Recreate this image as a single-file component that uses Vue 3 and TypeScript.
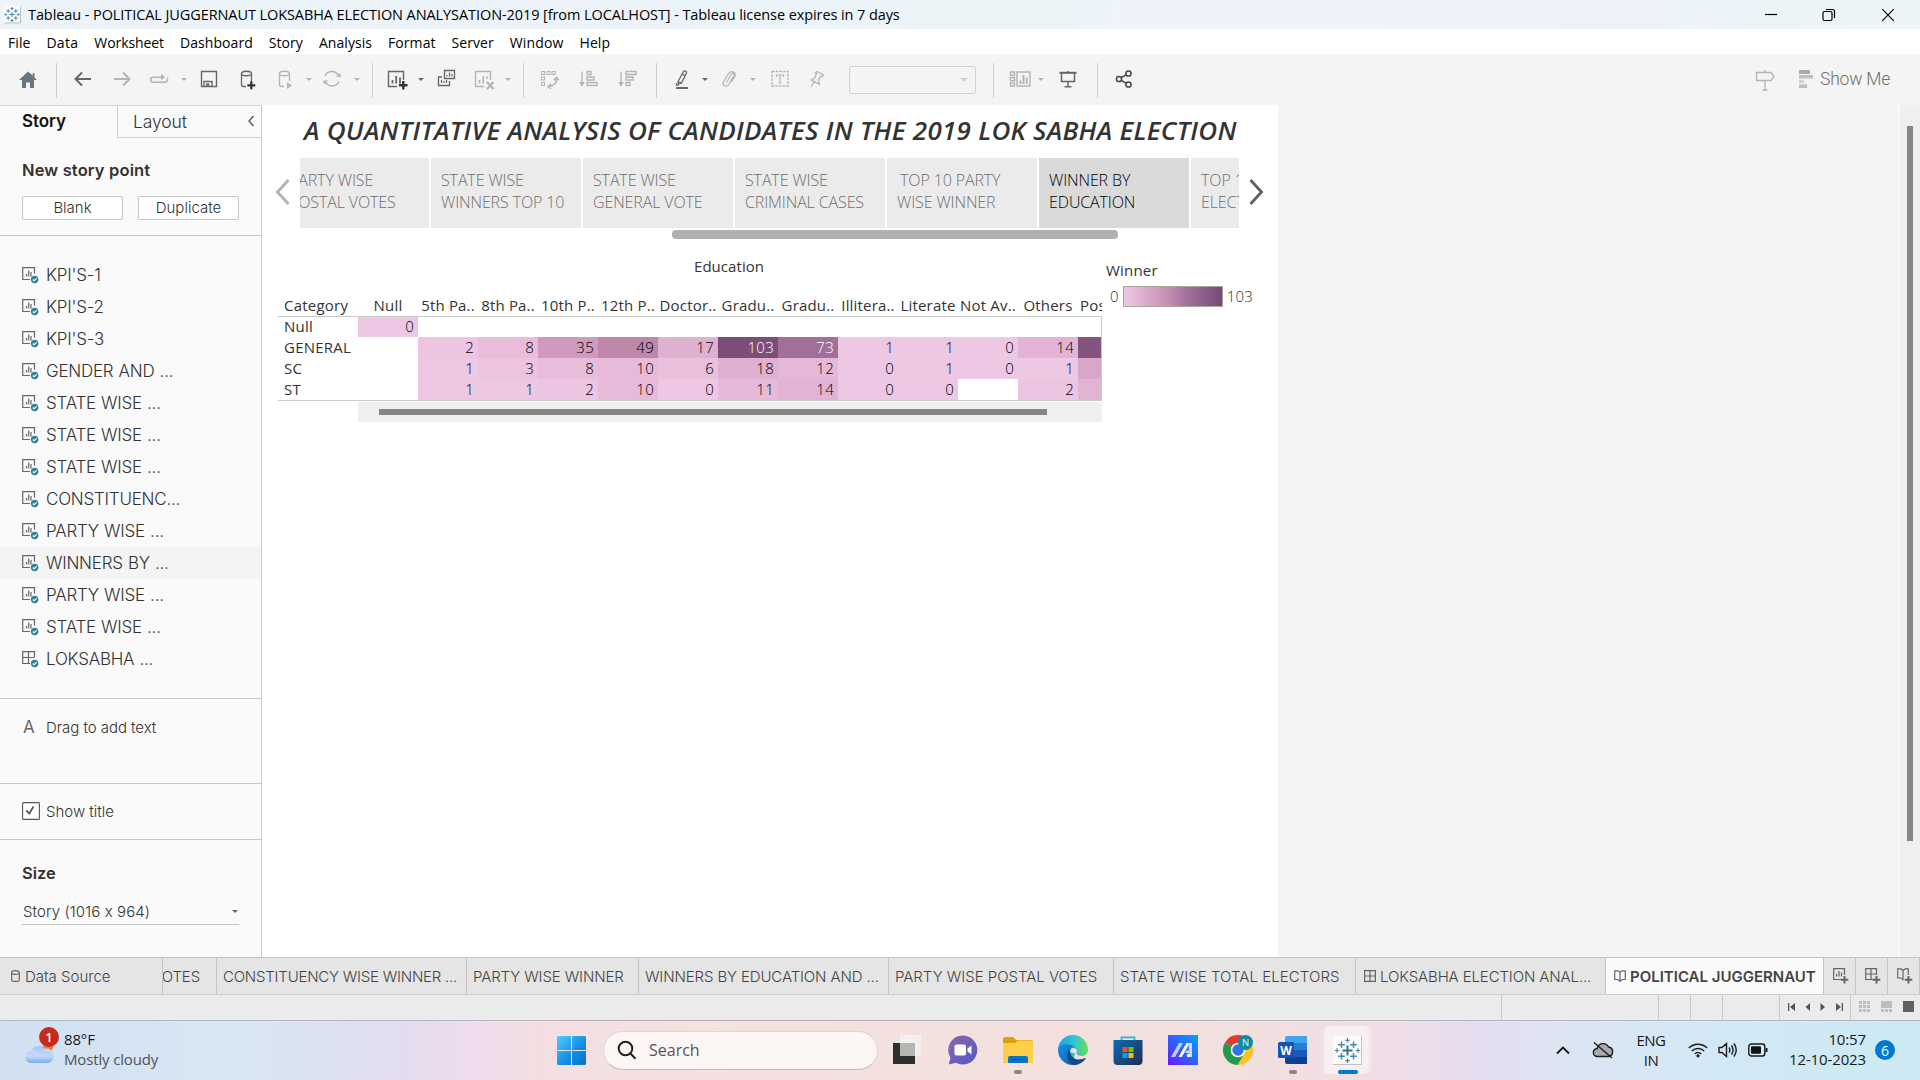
<script setup lang="ts">
interface Tool { icon: string; gap: number; kind?: 'sep' | 'caret' | 'box'; tone?: 'dim' | 'dark' }
interface Cell { v: string; c: string; light?: boolean }

const menus = ['File', 'Data', 'Worksheet', 'Dashboard', 'Story', 'Analysis', 'Format', 'Server', 'Window', 'Help']

const glyphs: Record<string, string> = {
  home: '<path d="M12 4.500 3 13h3v8h4v-5.500h4V21h4v-8h3l-2.500-2.400V6h-1.700v2.600z" fill="#687684" stroke="none"/>',
  back: '<path d="M20 12H5M11 5.500 4.500 12l6.500 6.500" stroke-width="2"/>',
  forward: '<path d="M4 12h15M13 5.500l6.500 6.500-6.500 6.500" stroke-width="2"/>',
  redo: '<path d="M16 10.200H6.500c-4 0-4 5 0 5h11c3 0 4-2.500 2.500-4.500" stroke-width="1.500"/><path d="M14 6.500v7l4-3.500z" fill="currentColor" stroke="none"/>',
  save: '<path d="M4.500 4.500h15v15h-15zM7 19.500v-5h8v5M9.800 19.500v-2.500h1.700v2.500" stroke-width="1.400"/>',
  dbAdd: '<path d="M11 19.500H8.500c-1.500 0-2-.8-2-1.800V6.500M16.500 6.500V14M6.500 6.500c0-3 10-3 10 0s-10 3-10 0z" stroke-width="1.300"/><path d="M16.300 14.300v8M12.300 18.300h8" stroke="#333" stroke-width="2.300"/>',
  dbRun: '<path d="M11 19.500H8.500c-1.500 0-2-.8-2-1.800V6.500M16.500 6.500V14M6.500 6.500c0-3 10-3 10 0s-10 3-10 0z" stroke-width="1.300"/><path d="M14 15v7l5-3.500z" fill="currentColor" stroke="none"/>',
  refresh: '<path d="M5 9a7.500 7.500 0 0 1 13.500-.5M19 14.500a7.500 7.500 0 0 1-13.500.5" stroke-width="1.500"/><path d="M16 10h5l-.8-4zM8 13.500H3.200L4 18z" fill="currentColor" stroke="none"/>',
  sheetAdd: '<path d="M12 19.500H3.500v-15h15V13" stroke-width="1.400"/><path d="M7.500 16.500v-3.500M11.200 16.500V9M15 16.500v-6" stroke-width="1.800"/><path d="M18.300 14v8.500M14 18.300h8.500" stroke="#333" stroke-width="2.400"/>',
  duplicate: '<path d="M10.500 3.500h10v8h-10zM8 10H4.500v8.500h11V14" stroke-width="1.300"/><path d="M13 9.500V8M15.500 9.500V5.500M18 9.500V7M7.500 16v-3M10 16v-2M12.500 16v-3" stroke-width="1.200"/>',
  clear: '<path d="M12 19.500H3.500v-15h15V13" stroke-width="1.400"/><path d="M7.500 16.500v-3.500M11.200 16.500V9M15 12v-2.500" stroke-width="1.600"/><path d="M15 15l6.500 7M21.500 15 15 22" stroke-width="2.200"/>',
  swap: '<path d="M3.500 4.500h3v3h-3zM9 4.500h3v3H9zM14 4.500h3v3h-3zM3.500 10h3v3h-3zM3.500 15.500h3v3h-3z" stroke-width="1.100"/><path d="M18.500 11.500c.5 4-2 7-7.500 8M15.800 13.200l2.700-3 2.500 3M13 16.800l-3 2.600 3 2.300" stroke-width="1.400"/>',
  sortAsc: '<path d="M5 4.500V19M10 4.500h4v3h-4zM10 10h7v3h-7zM10 15.500h10v3H10z" stroke-width="1.300"/><path d="M2.200 15h5.600L5 19.500z" fill="currentColor" stroke="none"/>',
  sortDesc: '<path d="M5 4.500V19M10 4.500h10v3H10zM10 10h7v3h-7zM10 15.500h4v3h-4z" stroke-width="1.300"/><path d="M2.200 15h5.600L5 19.500z" fill="currentColor" stroke="none"/>',
  highlight: '<path d="M12.500 4.500 7 14.500l.5 2.500 3-1L15.500 6c.5-2-2-2.800-3-1.500zM11 7l3.500 2M7 14.500l3.500 1.500M5.500 16v2.200h2.500" stroke-width="1.300"/><path d="M5 21h12" stroke-width="2"/>',
  clip: '<path d="M8.500 15.500l5-8.500c1-1.800 3.500-.5 2.500 1.500l-5.500 9.500c-1.800 2.500-6.500.5-5-3l5-8.500c2.500-3.500 8-1.500 6.500 2.500l-3.500 6" stroke-width="1.200"/>',
  text: '<path d="M4 4.500h16v14.500H4z" stroke-width="1.400" stroke-dasharray="2.500 1.200"/><path d="M8.500 10V8h7v2M12 8v8M10.300 16h3.400" stroke-width="1.200"/>',
  pin: '<path d="M12 4.500l6.500 3.500-1 1.500-2-.3-2 4 .8 4-8-4.300 3.300-1.800 2-4.300-1.200-1zM9.500 14.500 6 19.500" stroke-width="1.300"/>',
  cards: '<path d="M2.500 5h4v3.200h-4zM2.500 10.500h4v3.200h-4zM2.500 16h4v3h-4zM9 5h13v14H9z" stroke-width="1.400"/><path d="M12.500 17v-3.500M15.500 17V8M18.700 17v-6.500" stroke-width="1.900"/>',
  present: '<path d="M3.500 5.800h17" stroke-width="2"/><path d="M12 4v2M5.500 6v8.500h13V6M12 14.500v5M8.500 19.700h7" stroke-width="1.500"/>',
  share: '<circle cx="6" cy="12" r="2.600"/><circle cx="15.500" cy="6.500" r="2.600"/><circle cx="15.500" cy="17.500" r="2.600"/><path d="M8.300 10.700l5-3M8.300 13.300l5 3"/>',
  signpost: '<path d="M12 3v2.500M3.500 5.500h14.500l3 4-3 4H3.500zM12 13.500V22.500M9.500 23h5" stroke-width="1.300"/>',
}

const tools: Tool[] = [
  { icon: 'home', gap: 16 }, { icon: '', gap: 16, kind: 'sep' },
  { icon: 'back', gap: 14 }, { icon: 'forward', gap: 15, tone: 'dim' }, { icon: 'redo', gap: 13, tone: 'dim' }, { icon: '', gap: 10, kind: 'caret', tone: 'dim' },
  { icon: 'save', gap: 9 }, { icon: 'dbAdd', gap: 14 }, { icon: 'dbRun', gap: 14, tone: 'dim' }, { icon: '', gap: 9, kind: 'caret', tone: 'dim' },
  { icon: 'refresh', gap: 7, tone: 'dim' }, { icon: '', gap: 10, kind: 'caret', tone: 'dim' }, { icon: '', gap: 11, kind: 'sep' },
  { icon: 'sheetAdd', gap: 12 }, { icon: '', gap: 9, kind: 'caret' }, { icon: 'duplicate', gap: 9 }, { icon: 'clear', gap: 14, tone: 'dim' },
  { icon: '', gap: 9, kind: 'caret', tone: 'dim' }, { icon: '', gap: 11, kind: 'sep' },
  { icon: 'swap', gap: 14, tone: 'dim' }, { icon: 'sortAsc', gap: 15, tone: 'dim' }, { icon: 'sortDesc', gap: 15, tone: 'dim' }, { icon: '', gap: 16, kind: 'sep' },
  { icon: 'highlight', gap: 14 }, { icon: '', gap: 7, kind: 'caret' }, { icon: 'clip', gap: 9, tone: 'dim' }, { icon: '', gap: 8, kind: 'caret', tone: 'dim' },
  { icon: 'text', gap: 11, tone: 'dim' }, { icon: 'pin', gap: 13, tone: 'dim' }, { icon: '', gap: 20, kind: 'box' }, { icon: '', gap: 17, kind: 'sep' },
  { icon: 'cards', gap: 14, tone: 'dim' }, { icon: '', gap: 6, kind: 'caret', tone: 'dim' }, { icon: 'present', gap: 11 }, { icon: '', gap: 17, kind: 'sep' },
  { icon: 'share', gap: 15, tone: 'dark' },
]

const sheets = ["KPI'S-1", "KPI'S-2", "KPI'S-3", 'GENDER AND ...', 'STATE WISE ...', 'STATE WISE ...', 'STATE WISE ...', 'CONSTITUENC...', 'PARTY WISE ...', 'WINNERS BY ...', 'PARTY WISE ...', 'STATE WISE ...', 'LOKSABHA ...']

const points = [
  ['PARTY WISE', 'POSTAL VOTES'], ['STATE WISE', 'WINNERS TOP 10'], ['STATE WISE', 'GENERAL VOTE'], ['STATE WISE', 'CRIMINAL CASES'],
  ['TOP 10 PARTY', 'WISE WINNER'], ['WINNER BY', 'EDUCATION'], ['TOP 10', 'ELECTORS'],
]

const columns = ['Null', '5th Pa..', '8th Pa..', '10th P..', '12th P..', 'Doctor..', 'Gradu..', 'Gradu..', 'Illitera..', 'Literate', 'Not Av..', 'Others', 'Post']

const shades: Record<string, string> = {
  0: '#edc8e4', 1: '#eec7e3', 2: '#edc5e2', 3: '#ecc4e0', 6: '#eac0dd', 8: '#e8bcda', 10: '#e7bad9', 11: '#e6b9d8', 12: '#e5b8d7',
  14: '#e2b3d4', 17: '#dfb1d0', 18: '#dfb0cf', 35: '#cf9abd', 49: '#bf87aa', 73: '#a0709b', 103: '#7b4d78',
}
const cell = (v: string): Cell => ({ v, c: v ? shades[v] : 'transparent', light: Number(v) > 60 })
const tail = (c: string): Cell => ({ v: '', c })
const blank = Array<string>(12).fill('')
const table: { name: string; cells: Cell[] }[] = [
  { name: 'Null', cells: ['0', ...blank].map(cell) },
  { name: 'GENERAL', cells: [...['', '2', '8', '35', '49', '17', '103', '73', '1', '1', '0', '14'].map(cell), tail('#83557e')] },
  { name: 'SC', cells: [...['', '1', '3', '8', '10', '6', '18', '12', '0', '1', '0', '1'].map(cell), tail('#d7a6c8')] },
  { name: 'ST', cells: [...['', '1', '1', '2', '10', '0', '11', '14', '0', '0', '', '2'].map(cell), tail('#e2b4d4')] },
]

const tabs: { label: string; w: number; icon?: string; on?: boolean; fit?: string }[] = [
  { label: 'CONSTITUENCY WISE WINNER ...', w: 250, fit: 'tight' }, { label: 'PARTY WISE WINNER', w: 172 }, { label: 'WINNERS BY EDUCATION AND ...', w: 250 },
  { label: 'PARTY WISE POSTAL VOTES', w: 225, fit: 'loose' }, { label: 'STATE WISE TOTAL ELECTORS', w: 242, fit: 'wide' },
  { label: 'LOKSABHA ELECTION ANAL...', w: 250, icon: 'dash' }, { label: 'POLITICAL JUGGERNAUT', w: 218, icon: 'book', on: true },
]
</script>

<template>
  <div class="screen">
    <header class="titlebar">
      <svg class="app-icon" viewBox="0 0 18 18"><rect width="18" height="18" fill="#f7f8f8" /><path d="M17.500 1v16.500H1" fill="none" stroke="#b9c0c4" /><path d="M9 6.500v5M6.500 9h5M9 1.500v3M7.500 3h3M9 13.500v3M7.500 15h3M1.500 9h2.500M2.700 7.800v2.400M14 9h2.500M15.200 7.800v2.400M3.500 5.500H7M5.200 3.800v3.400M11 5.500h3.500M12.800 3.800v3.400M3.500 12.500H7M5.200 10.800v3.400M11 12.500h3.500M12.800 10.800v3.400" stroke="#4584ac" fill="none" /></svg>
      <span class="title">Tableau - POLITICAL JUGGERNAUT LOKSABHA ELECTION ANALYSATION-2019 [from LOCALHOST] - Tableau license expires in 7 days</span>
      <div class="win">
        <svg viewBox="0 0 14 14"><path d="M1 6.500h12" /></svg>
        <svg viewBox="0 0 14 14"><rect x="1" y="3.500" width="9" height="9" rx="1.500" /><path d="M4 1.500h6.500a2 2 0 0 1 2 2V10" /></svg>
        <svg viewBox="0 0 14 14"><path d="M1.200 1.200l11.600 11.600M12.800 1.200 1.200 12.800" /></svg>
      </div>
    </header>
    <nav class="menubar"><span v-for="m in menus" :key="m" :class="m.toLowerCase()">{{ m }}</span></nav>

    <div class="toolbar">
      <template v-for="(t, i) in tools" :key="i">
        <i v-if="t.kind === 'sep'" class="sep" :style="{ marginLeft: t.gap + 'px' }"></i>
        <i v-else-if="t.kind === 'caret'" class="caret" :class="t.tone" :style="{ marginLeft: t.gap + 'px' }"></i>
        <div v-else-if="t.kind === 'box'" class="combo" :style="{ marginLeft: t.gap + 'px' }"><i class="caret faint"></i></div>
        <svg v-else class="tool" :class="t.tone" viewBox="0 0 24 24" :style="{ marginLeft: t.gap + 'px' }" v-html="glyphs[t.icon]"></svg>
      </template>
      <div class="right-tools">
        <svg class="tool dim" viewBox="0 0 24 24" v-html="glyphs.signpost"></svg>
        <svg class="bars" viewBox="0 0 14 18"><path d="M0 0h11v4H0z" fill="#aaa" /><path d="M0 5h14v3.600H0zM0 14.500h8V18H0z" fill="#bfbfbf" /><path d="M0 9.700h5v3.500H0z" fill="#d2d2d2" /></svg>
        <span class="showme">Show Me</span>
      </div>
    </div>

    <div class="work">
      <aside class="side">
        <div class="side-tabs">
          <div class="tab-story">Story</div>
          <div class="tab-layout"><span>Layout</span><svg viewBox="0 0 8 12"><path d="M6.500 1 2 6l4.500 5" /></svg></div>
        </div>
        <section class="newpoint">
          <h3>New story point</h3>
          <div class="btns"><button>Blank</button><button>Duplicate</button></div>
        </section>
        <section class="sheets">
          <div v-for="(s, i) in sheets" :key="i" class="sheet" :class="{ hover: i === 9 }">
            <svg viewBox="0 0 18 17">
              <path d="M12.500 6.500V.7H.7v11.800H8" />
              <path v-if="i < 12" d="M4.500 9.500V7M6.700 9.500V3.500M9 9.500V5" />
              <path v-else d="M6.500.7v11.800M.7 6.500h11.800" />
              <circle cx="12.600" cy="12.500" r="3.700" fill="#2f7f9f" stroke="none" /><path d="M10.800 12.500l1.400 1.400 2.400-2.700" stroke="#fff" />
            </svg>
            <span>{{ s }}</span>
          </div>
        </section>
        <section class="drag"><b>A</b><span>Drag to add text</span></section>
        <section class="showtitle"><svg viewBox="0 0 18 18"><rect x=".6" y=".6" width="16.800" height="16.800" rx="1" fill="#fff" /><path d="M4.300 8.300l3 3.200L11.500 4.500" stroke-width="1.700" /></svg><span>Show title</span></section>
        <section class="size">
          <h3>Size</h3>
          <div class="select"><span>Story (1016 x 964)</span><i class="caret"></i></div>
        </section>
      </aside>

      <main class="canvas">
        <h1>A QUANTITATIVE ANALYSIS OF CANDIDATES IN THE 2019 LOK SABHA ELECTION</h1>
        <div class="nav">
          <svg class="chev" viewBox="0 0 16 30"><path d="M13.500 3 2.500 15l11 12" stroke="#b2b2b2" /></svg>
          <div class="strip">
            <div v-for="(p, i) in points" :key="i" class="point" :class="{ on: i === 5, first: i === 0, indent: i === 4 }"><span>{{ p[0] }}</span><span>{{ p[1] }}</span></div>
          </div>
          <svg class="chev" viewBox="0 0 16 30"><path d="M2.500 3l11 12-11 12" stroke="#606060" /></svg>
        </div>
        <div class="nav-scroll"></div>

        <div class="viz">
          <div class="grid-wrap">
            <div class="axis">Education</div>
            <div class="heads"><span class="cat">Category</span><div class="cols"><span v-for="(c, i) in columns" :key="i">{{ c }}</span></div></div>
            <div class="body">
              <div v-for="r in table" :key="r.name" class="row">
                <span class="cat">{{ r.name }}</span>
                <div class="cols"><span v-for="(c, i) in r.cells" :key="i" class="cell" :class="{ light: c.light }" :style="{ background: c.c }">{{ c.v }}</span></div>
              </div>
            </div>
            <div class="hscroll"><i></i></div>
          </div>
          <div class="legend"><div class="lt">Winner</div><div class="lr"><span>0</span><i></i><span>103</span></div></div>
        </div>
      </main>
      <div class="void"></div>
      <div class="vscroll"><i></i></div>
    </div>

    <footer class="tabs">
      <div class="ds"><svg viewBox="0 0 9 12"><path d="M.7 2.500c0-2.400 7.600-2.400 7.600 0v7c0 1.300-.5 1.800-1.600 1.800H2.300C1.200 11.300.7 10.800.7 9.500zM.7 3c0 1.800 7.600 1.800 7.600 0" /></svg>Data Source</div>
      <div class="cut"><span>VOTES</span></div>
      <div v-for="t in tabs" :key="t.label" class="tab" :class="[t.fit, { on: t.on, iconed: t.icon }]" :style="{ width: t.w + 'px' }">
        <svg v-if="t.icon === 'dash'" viewBox="0 0 12 12"><path d="M.6.600h10.800v10.800H.6zM6 .6v10.800M.6 6h10.800" /></svg>
        <svg v-if="t.icon === 'book'" viewBox="0 0 12 12"><path d="M6 2.200v9.200M6 2.200 4 .8H.7v8.700h3L6 11.300l2.300-1.800h3V.8H8z" /></svg>
        <span>{{ t.label }}</span>
      </div>
      <div class="add"><svg viewBox="0 0 16 16"><path d="M8 11.500H.7V.7h10.800V7M3.700 8.500V6M6 8.500V3M8.500 8.500V4.500" /><path d="M11.500 8v7.500M7.800 11.700h7.500" stroke-width="2" /></svg></div>
      <div class="add"><svg viewBox="0 0 16 16"><path d="M8 11.500H.7V.7h10.800V7M6 .7v10.800M.7 6h10.800" /><path d="M11.500 8v7.500M7.800 11.700h7.500" stroke-width="2" /></svg></div>
      <div class="add"><svg viewBox="0 0 16 16"><path d="M6 2.200V11.500L4 10H.7V.9H4l2 1.500L8 .9h3.300V7" /><path d="M11.500 8v7.500M7.800 11.700h7.500" stroke-width="2" /></svg></div>
    </footer>
    <div class="status">
      <i class="s1"></i><i class="s2"></i><i class="s3"></i><i class="s3"></i><i class="s4"></i>
      <div class="pager">
        <svg viewBox="0 0 8 8"><path d="M0 0h1.300v8H0zM7 0v8L2 4z" /></svg><svg viewBox="0 0 8 8"><path d="M6 0v8L1.500 4z" /></svg>
        <svg viewBox="0 0 8 8"><path d="M1.500 0v8L6 4z" /></svg><svg viewBox="0 0 8 8"><path d="M6.700 0H8v8H6.700zM1 0v8l5-4z" /></svg>
      </div>
      <div class="views">
        <svg viewBox="0 0 11 11"><path d="M0 0h3v3H0zM4 0h3v3H4zM8 0h3v3H8zM0 4h3v3H0zM4 4h3v3H4zM8 4h3v3H8zM0 8h3v3H0zM4 8h3v3H4zM8 8h3v3H8z" fill="#bdbdbd" /></svg>
        <svg viewBox="0 0 11 11"><path d="M0 0h11v7H0zM0 8h3v3H0zM4 8h3v3H4zM8 8h3v3H8z" fill="#bdbdbd" /></svg>
        <svg viewBox="0 0 11 11"><path d="M0 0h11v11H0z" fill="#616161" /></svg>
      </div>
    </div>

    <div class="taskbar">
      <div class="weather">
        <div class="wicon">
          <svg viewBox="0 0 30 21"><defs><linearGradient id="cl" x1="0" y1="0" x2="0" y2="1"><stop offset="0" stop-color="#a5c3f5" /><stop offset=".6" stop-color="#c3d9fa" /><stop offset="1" stop-color="#7fa8ea" /></linearGradient></defs><circle cx="23" cy="4" r="5" fill="#f47a1c" /><path d="M6.500 20a6 6 0 0 1-.5-12A8.500 8.500 0 0 1 20 5.500 7.300 7.300 0 0 1 23 20z" fill="url(#cl)" /><path d="M6 8.200c3-.5 5 1 6 3M18 8c4-2 9-1 10.500 4" stroke="#dbe8fc" fill="none" /></svg>
          <span class="badge red">1</span>
        </div>
        <div class="wtext"><span>88°F</span><span class="sub">Mostly cloudy</span></div>
      </div>
      <div class="dock">
        <svg class="start" viewBox="0 0 29 29"><defs><linearGradient id="wn" x1="0" y1="0" x2="1" y2="1"><stop offset="0" stop-color="#4fd0ff" /><stop offset=".55" stop-color="#1690e4" /><stop offset="1" stop-color="#0070d0" /></linearGradient></defs><path d="M1 0h13v14H0V1zM15 0h13l1 1v13H15zM0 15h14v14H1l-1-1zM15 15h14v13l-1 1H15z" fill="url(#wn)" /></svg>
        <div class="search"><svg viewBox="0 0 20 20"><circle cx="8.500" cy="8.500" r="6.800" /><path d="M13.500 13.500l5 5.200" /></svg><span>Search</span></div>
        <svg class="ic tv" viewBox="0 0 30 30"><path d="M0 8h22v21H0z" fill="#2e2e2c" /><path d="M7 0h21v21H7z" fill="#f1f1f1" /><path d="M7 8h15v13H7z" fill="#b5b5b3" /></svg>
        <svg class="ic" viewBox="0 0 30 30"><defs><linearGradient id="ch" x1="0" y1="0" x2="1" y2="1"><stop offset="0" stop-color="#8d67a9" /><stop offset="1" stop-color="#5059c9" /></linearGradient></defs><path d="M15 .5A14.500 14.500 0 1 1 8 27.800L.8 29.500l1.600-7A14.500 14.500 0 0 1 15 .5z" fill="url(#ch)" /><rect x="6.500" y="9.500" width="11.500" height="11" rx="2" fill="#fff" /><path d="M19.500 13.500l4-3v9l-4-3z" fill="#fff" /></svg>
        <div class="slot"><svg class="ic" viewBox="0 0 30 30"><path d="M0 4.500Q0 2 2 2h8l3 3h17v8H0z" fill="#dfa007" /><path d="M0 8h12l3-2.500h15V28H0z" fill="#fdce4a" /><path d="M5 23q0-2 2-2h16q2 0 2 2v5H5z" fill="#0a74c9" /><path d="M8.500 24.500h13" stroke="#0b4f8f" /></svg><i class="dot"></i></div>
        <svg class="ic" viewBox="0 0 30 30"><defs><linearGradient id="e1" x1="0" y1="0" x2="1" y2="0"><stop offset="0" stop-color="#1da1e6" /><stop offset=".55" stop-color="#33c3d6" /><stop offset="1" stop-color="#6be04e" /></linearGradient><linearGradient id="e2" x1="0" y1="0" x2="1" y2="1"><stop offset="0" stop-color="#1593dd" /><stop offset="1" stop-color="#0d5ab5" /></linearGradient></defs><path d="M0 15a15 15 0 0 1 30 0c0 4-3 6-6.500 6-3 0-5-1-5-2.500C18.500 17 19 16.500 18.500 14L15 26 0 16z" fill="url(#e1)" /><path d="M0 15C.5 8.500 13 7 17.500 13c-3-2-6 0-6 4 0 6 5 9 9 12A15 15 0 0 1 0 15z" fill="url(#e2)" /><path d="M12.500 13.500c-1.500 5 2 11 8 11 3 0 5-1 6.500-1.500.8-.2 1 .3.700.8A15 15 0 0 1 16 30C8 28 7.500 18 12.500 13.500z" fill="#114a8b" /><path d="M12 17c0-3.500 3.500-5 5.800-3 1.600 1.800-.3 3-.3 4.600" fill="#f3e1e0" /></svg>
        <svg class="ic" viewBox="0 0 30 30"><defs><linearGradient id="st" x1="0" y1="0" x2="1" y2="1"><stop offset="0" stop-color="#0f6cb4" /><stop offset="1" stop-color="#1d2e52" /></linearGradient></defs><path d="M8.500 8V2.300h13V8" fill="none" stroke="#27b4ee" stroke-width="1.800" /><path d="M.5 5h29v21q0 4-4 4h-21q-4 0-4-4z" fill="url(#st)" /><path d="M9.500 12h5v5h-5z" fill="#f25022" /><path d="M15.500 12h5v5h-5z" fill="#7fba00" /><path d="M9.500 18h5v5h-5z" fill="#00a4ef" /><path d="M15.500 18h5v5h-5z" fill="#ffb900" /></svg>
        <svg class="ic" viewBox="0 0 30 30"><defs><linearGradient id="ma" x1="1" y1="0" x2="0" y2="1"><stop offset="0" stop-color="#00a6ff" /><stop offset=".5" stop-color="#2f62ff" /><stop offset="1" stop-color="#6a17ff" /></linearGradient></defs><path d="M0 0h30v30H0z" fill="url(#ma)" /><path d="M3 22 11 8h4L7 22z" fill="#bccfff" /><path d="M10.500 22l8-14h3.300L13.800 22z" fill="#fff" /><path d="M19.500 8H24v14h-3v-4h-4l1.500-2.500h2.300v-5z" fill="#c9dbff" /><circle cx="20.500" cy="20.500" r="1.700" fill="#fff" /></svg>
        <svg class="ic" viewBox="0 0 30 30"><path d="M15 15 2 7.500A15 15 0 0 1 28 7.500z" fill="#e33b2e" /><path d="M15 15 2 7.500A15 15 0 0 0 15 30l6.500-11.500z" fill="#229a48" /><path d="M15 8h13.300A15 15 0 0 1 14.500 30l7-11z" fill="#fcc31e" /><circle cx="15" cy="15" r="7.300" fill="#fff" /><circle cx="15" cy="15" r="5.700" fill="#2f74ea" /><circle cx="22.500" cy="7.500" r="7.500" fill="#0b8fa0" /><text x="22.500" y="11" font-size="9.500" fill="#e4f6f6" text-anchor="middle">N</text></svg>
        <div class="slot"><svg class="ic" viewBox="0 0 30 30"><path d="M7 3q0-2 2-2h20v7.500H7z" fill="#41a5ee" /><path d="M7 8h22v7H7z" fill="#2b7cd3" /><path d="M7 15h22v7H7z" fill="#185abd" /><path d="M7 22h22v7H9q-2 0-2-2z" fill="#103f91" /><rect y="7" width="16" height="16" rx="1.500" fill="#1653b4" /><text x="8" y="19.500" font-size="12" font-weight="700" fill="#fff" text-anchor="middle">W</text></svg><i class="dot"></i></div>
        <div class="active-app"><svg viewBox="0 0 29 29"><rect width="29" height="29" fill="#fbfbfb" /><path d="M28.500 0v28.500H0" stroke="#c2c2c2" fill="none" /><g stroke="#4a86a8" fill="none" stroke-width="1.400"><path d="M14.500 9.500v10M9.500 14.500h10" stroke="#306f96" stroke-width="1.900" /><path d="M8.500 5.500v6.500M5.200 8.700h6.600M20.500 5.500v6.500M17.200 8.700h6.600M8.500 17v6.500M5.200 20.300h6.600M20.500 17v6.500M17.200 20.300h6.600" /><path d="M14.500 2v4.500M12.300 4.300h4.400M14.500 22.500V27M12.300 24.700h4.400M4 12.300v4.400M1.700 14.500h4.500M25 12.300v4.400M22.700 14.500h4.500" stroke-width="1.200" /></g></svg><i></i></div>
      </div>
      <div class="tray">
        <svg class="up" viewBox="0 0 14 10"><path d="M1 8.500l6-6 6 6" /></svg>
        <svg class="cloud" viewBox="0 0 22 18"><path d="M5.500 15.500a4 4 0 0 1-.3-8A6 6 0 0 1 16.500 6a4.800 4.800 0 0 1 0 9.500z" fill="#aaa" /><path d="M2 1.500l18 15.500" /></svg>
        <div class="lang"><span>ENG</span><span>IN</span></div>
        <svg class="wifi" viewBox="0 0 20 16"><path d="M.8 6a13 13 0 0 1 18.400 0M3.800 9a8.800 8.800 0 0 1 12.400 0M6.800 12a4.600 4.600 0 0 1 6.400 0" /><circle cx="10" cy="13.800" r="1.600" fill="#1a1a1a" stroke="none" /></svg>
        <svg class="vol" viewBox="0 0 20 16"><path d="M1 5.500h3L8.500 1.500v13L4 10.500H1zM11 5.500q1.700 2.500 0 5M13.500 3.500q3.200 4.500 0 9M16 1.500q4.500 6.500 0 13" /></svg>
        <svg class="bat" viewBox="0 0 20 14"><rect x=".8" y="1" width="16" height="12" rx="2.500" /><rect x="3" y="3.300" width="10" height="7.400" rx="1" fill="#111" stroke="none" /><path d="M18.500 5v4" stroke-width="2" /></svg>
        <div class="clock"><span>10:57</span><span>12-10-2023</span></div>
        <span class="badge blue">6</span>
      </div>
    </div>
  </div>
</template>

<style>
body { overflow: hidden; }
</style>

<style scoped>
* { box-sizing: border-box; }
.screen { width: 1920px; height: 1080px; display: flex; flex-direction: column; overflow: hidden; font-family: Inter, "Open Sans", sans-serif; font-variant-ligatures: none; font-feature-settings: "calt" 0; white-space: nowrap; background: #f4f4f4; color: #333; }
svg { display: block; flex: none; }
i { display: block; flex: none; }
h1, h3 { margin: 0; }

.titlebar { height: 29px; flex: none; display: flex; align-items: center; background: linear-gradient(90deg, #ecf4fa 0, #ecf4fa 640px, #ebf5f7 960px, #ebf4f7 1060px, #eef3fc 1110px, #eef3fb 1660px, #ebf4f7 1780px, #edf5f7 100%); font-family: "Open Sans", sans-serif; }
.app-icon { width: 18px; height: 19px; margin: 0 7px 0 3px; }
.title { font-size: 14.5px; letter-spacing: -.085px; color: #000; }
.win { margin-left: auto; display: flex; gap: 45px; padding-right: 25px; }
.win svg { width: 14px; height: 14px; fill: none; stroke: #000; stroke-width: 1.2; }
.win svg:first-child { margin-right: -1px; }

.menubar { height: 25px; flex: none; display: flex; align-items: center; gap: 16px; padding: 1px 0 0 8px; background: #fff; color: #000; font: 14px "Open Sans", sans-serif; letter-spacing: .06px; }
.menubar .data { letter-spacing: .3px; }
.menubar .worksheet { letter-spacing: -.08px; }
.menubar .window { letter-spacing: .15px; }

.toolbar { height: 51px; flex: none; display: flex; align-items: center; padding-bottom: 1px; background: #f4f4f4; }
.tool { width: 24px; height: 24px; fill: none; stroke: currentColor; stroke-width: 1.5; color: #666; }
.tool.dark { color: #444; }
.tool.dim { color: #b4b4b4; }
.sep { width: 1px; height: 35px; background: #cfcfcf; margin-top: 3px; }
.caret { width: 0; height: 0; border: 3px solid transparent; border-top: 3.500px solid #666; border-bottom: 0; margin-right: 1px; }
.caret.dim { border-top-color: #b4b4b4; }
.caret.faint { border-width: 4px 4px 0; border-top-color: #cfcfcf; }
.combo { width: 127px; height: 28px; border: 1px solid #d2d2d2; border-radius: 2px; display: flex; align-items: center; justify-content: flex-end; padding-right: 6px; margin-top: 2px; }
.right-tools { margin-left: auto; display: flex; align-items: center; padding-right: 29px; }
.bars { width: 14px; height: 18px; margin: 0 7px 0 22px; }
.showme { font: 300 17.500px Roboto, sans-serif; width: 71px; letter-spacing: -.2px; color: #6f6f6f; }

.work { height: 852px; flex: none; display: flex; }
.side { width: 262px; flex: none; background: #fafafa; border-right: 1px solid #c9c9c9; display: flex; flex-direction: column; }
.side-tabs { height: 33px; display: flex; border-top: 1px solid #d4d4d4; }
.tab-story { width: 117px; padding: 4px 0 0 22px; font: 600 17px/22px Inter, sans-serif; letter-spacing: -.05px; color: #111; }
.tab-layout { flex: 1; border-left: 1px solid #d0d0d0; border-bottom: 1px solid #d0d0d0; padding: 0 6px 0 15px; display: flex; align-items: center; justify-content: space-between; font-weight: 300; font-size: 17.500px; letter-spacing: -.1px; }
.tab-layout svg { width: 8px; height: 12px; margin-bottom: 2px; fill: none; stroke: #555; stroke-width: 1.300; }
.newpoint { height: 98px; border-bottom: 1px solid #c9c9c9; padding: 21px 22px 0; }
.newpoint h3 { font: 600 16.500px/22px Inter, sans-serif; letter-spacing: .15px; }
.btns { display: flex; justify-content: space-between; margin-top: 15px; }
.btns button { width: 101px; height: 24px; padding: 0 0 1px; border: 1px solid #c5c5c5; border-radius: 2px; background: #fff; color: #333; font: 300 15px Inter, sans-serif; letter-spacing: 0; }
.sheets { height: 463px; border-bottom: 1px solid #c9c9c9; padding-top: 23px; }
.sheet { height: 32px; display: flex; align-items: center; gap: 6px; padding-left: 22px; font-size: 17px; font-weight: 300; letter-spacing: -.23px; word-spacing: .600px; }
.sheet.hover { background: #f4f4f4; }
.sheet svg { width: 18px; height: 17px; margin-top: 1px; fill: none; stroke: #666; stroke-width: 1.200; }
.drag { height: 85px; border-bottom: 1px solid #c9c9c9; display: flex; padding: 18px 0 0 23px; line-height: 22px; font-size: 15px; font-weight: 300; letter-spacing: -.05px; }
.drag b { width: 23px; font: 400 17px/20px Inter, sans-serif; color: #666; }
.showtitle { height: 56px; border-bottom: 1px solid #c9c9c9; display: flex; align-items: center; gap: 6px; padding-left: 22px; font-size: 15px; font-weight: 300; }
.showtitle svg { width: 18px; height: 18px; margin-bottom: 1px; fill: none; stroke: #555; stroke-width: 1.100; }
.size { padding: 22px 22px 0; }
.size h3 { font: 600 16.500px/22px Inter, sans-serif; }
.select { height: 30px; margin-top: 11px; padding: 3px 0 0 1px; border-bottom: 1px solid #c4c4c4; display: flex; align-items: center; justify-content: space-between; font-size: 15px; font-weight: 300; letter-spacing: .1px; }
.select .caret { border-width: 3.500px 3.500px 0; }

.canvas { width: 1016px; flex: none; background: #fff; font-family: "Open Sans", sans-serif; }
.canvas h1 { font: italic 600 26px/30px "Open Sans", sans-serif; letter-spacing: .26px; padding: 10px 0 0 42px; height: 53px; color: #333; }
.nav { display: flex; align-items: center; height: 70px; padding-left: 13px; }
.chev { width: 16px; height: 30px; margin-bottom: 2px; fill: none; stroke-width: 2.800; }
.strip { width: 939px; margin: 0 9px; height: 70px; display: flex; gap: 2px; overflow: hidden; }
.point { width: 150px; height: 70px; flex: none; padding: 11px 0 0 10px; background: #ebebeb; color: #6e6e6e; display: flex; flex-direction: column; font-size: 16px; font-weight: 300; line-height: 22px; letter-spacing: -.12px; }
.point.first { margin-left: -21px; }
.point.indent span:first-child { padding-left: 3px; }
.point.on { background: #dadada; color: #000; }
.nav-scroll { width: 446px; height: 9px; margin: 2px 0 0 410px; border-radius: 4px; background: #b0b0b0; }

.viz { display: flex; padding: 15px 0 0 16px; color: #333; font-size: 15px; }
.grid-wrap { width: 824px; flex: none; }
.axis { line-height: 22px; padding: 1px 0 0 416px; font-weight: 500; letter-spacing: .05px; }
.heads { height: 39px; display: flex; align-items: flex-end; font-weight: 500; line-height: 22px; }
.cat { width: 80px; flex: none; padding-left: 6px; font-weight: 500; letter-spacing: .22px; }
.cols { width: 744px; display: flex; overflow: hidden; }
.cols span { width: 60px; flex: none; text-align: center; letter-spacing: .18px; }
.cols span:last-child { width: 24px; padding-left: 2px; text-align: left; overflow: hidden; }
.body { border: 1px solid #c9cbc9; border-left: 0; }
.row { height: 21px; display: flex; line-height: 21px; }
.row:first-child { height: 20px; line-height: 18px; }
.cols .cell { height: 21px; text-align: right; padding-right: 4px; font-weight: 300; letter-spacing: .3px; color: #000; }
.cols .cell.light { color: #fff; }
.hscroll { margin: 1px 0 0 80px; height: 20px; padding: 7px 0 0 21px; background: #efefef; }
.hscroll i { width: 668px; height: 6px; background: #858583; }
.legend { padding: 6px 0 0 4px; }
.lt { font-weight: 500; line-height: 20px; letter-spacing: .2px; }
.lr { display: flex; align-items: center; gap: 4px; margin-top: 6px; padding-left: 4px; color: #333; font-weight: 300; line-height: 21px; letter-spacing: .2px; }
.lr i { width: 100px; height: 21px; border: 1px solid #aca597; background: linear-gradient(90deg, #eec8e4, #c68fb2 45%, #a0709b 65%, #77497a); }
.void { width: 621px; background: #f4f4f4; }
.vscroll { width: 21px; background: #efefef; border-left: 1px solid #fff; padding: 21px 0 0 7px; }
.vscroll i { width: 6px; height: 715px; background: #878787; }

.tabs { height: 38px; flex: none; display: flex; border-top: 1px solid #c4c4c4; border-bottom: 1px solid #cfcfcf; background: #e5e5e5; font-size: 15px; font-weight: 300; letter-spacing: -.12px; color: #444; }
.tabs > div { border-right: 1px solid #c4c4c4; display: flex; align-items: center; flex: none; }
.tabs svg { fill: none; stroke: #666; stroke-width: 1.200; }
.ds { width: 163px; padding-left: 11px; gap: 5px; letter-spacing: 0; }
.ds svg { width: 9px; height: 12px; }
.cut { width: 54px; overflow: hidden; justify-content: flex-end; padding-right: 16px; }
.tab { padding-left: 6px; }
.tab.tight { letter-spacing: -.22px; }
.tab.loose { letter-spacing: -.02px; }
.tab.wide { letter-spacing: .06px; }
.tab.iconed { padding-left: 8px; gap: 4px; }
.tab svg { width: 12px; height: 12px; }
.tab.on { background: #fafafa; font-weight: 600; letter-spacing: 0; }
.add { width: 32px; justify-content: center; padding-left: 2px; }
.add svg { width: 16px; height: 16px; }

.status { height: 25px; flex: none; display: flex; background: #ebebeb; }
.status > i { border-right: 1px solid #c9c9c9; }
.s1 { width: 1502px; } .s2 { width: 157px; } .s3 { width: 32px; } .s4 { width: 57px; }
.pager { width: 71px; border-right: 1px solid #c9c9c9; display: flex; align-items: center; justify-content: space-between; padding: 0 7px 2px 8px; }
.pager svg { width: 8px; height: 8px; fill: #555; }
.views { display: flex; align-items: center; gap: 11px; padding: 0 0 2px 8px; }
.views svg { width: 11px; height: 11px; }

.taskbar { flex: 1; display: grid; grid-template-columns: 557px 1fr auto; align-items: center; border-top: 1px solid #b4b4bd; font: 15px "Open Sans", sans-serif; color: #1a1a1a; background: linear-gradient(90deg, #d2e0f2 0, #d6e6f3 180px, #d9e6f2 260px, #e3ddef 400px, #eedbee 462px, #f3dfe2 540px, #f5e2de 700px, #f2e0df 1250px, #efdde8 1400px, #e6def0 1470px, #dbe5f2 1580px, #d4e8f6 1700px, #cceaf4 1920px); }
.weather { display: flex; padding-left: 25px; gap: 9px; }
.wicon { width: 30px; height: 40px; position: relative; padding-top: 12px; }
.wicon svg { width: 30px; height: 21px; }
.badge { width: 20px; height: 20px; border-radius: 50%; color: #fff; display: flex; align-items: center; justify-content: center; font-weight: 600; font-size: 13px; }
.badge.red { position: absolute; left: 14px; top: -4px; background: #c42b1c; }
.badge.blue { background: #0078d4; margin-left: 9px; margin-bottom: 1px; font-weight: 400; font-size: 14px; }
.wtext { display: flex; flex-direction: column; margin-top: -2px; line-height: 20px; letter-spacing: -.15px; }
.sub { color: #4f5358; }
.dock { display: flex; align-items: center; padding-bottom: 1px; }
.start { width: 29px; height: 29px; }
.search { width: 275px; height: 39px; margin: 0 14px 0 17px; border-radius: 20px; background: #fcf6f5; border: 1px solid #e6d2d0; border-bottom-color: #c9b8b6; display: flex; align-items: center; gap: 12px; padding-left: 13px; font-size: 16px; color: #555; }
.search svg { width: 20px; height: 20px; fill: none; stroke: #222; stroke-width: 2; }
.ic { width: 30px; height: 30px; margin-right: 25px; }
.tv { margin-left: 1px; }
.slot { width: 55px; position: relative; }
.dot { position: absolute; left: 11px; bottom: -9px; width: 8px; height: 4px; border-radius: 2px; background: #8c8584; }
.active-app { width: 44px; height: 48px; margin-left: -9px; border-radius: 5px; background: #f8f0f0; box-shadow: 4px 0 0 -1px #f6e9ea, 0 0 0 1px #f0e2e3; position: relative; padding: 10px 0 0 9px; }
.active-app svg { width: 29px; height: 29px; }
.active-app i { position: absolute; left: 14px; bottom: 0; width: 20px; height: 4px; border-radius: 2px; background: #0078d4; }
.tray { display: flex; align-items: center; padding-right: 25px; }
.tray svg { fill: none; stroke: #1a1a1a; stroke-width: 1.400; margin-bottom: 1px; }
.up { width: 14px; height: 10px; }
.up path { stroke-width: 1.900; }
.cloud { width: 22px; height: 18px; margin: 0 22px 0 22px; }
.lang { width: 30px; margin: -2px 22px 0 0; display: flex; flex-direction: column; align-items: center; line-height: 20px; letter-spacing: -.5px; }
.wifi { width: 20px; height: 16px; }
.vol { width: 20px; height: 16px; margin: 0 10px; }
.bat { width: 20px; height: 14px; }
.clock { width: 98px; margin-top: -3px; display: flex; flex-direction: column; align-items: flex-end; line-height: 20px; letter-spacing: -.13px; }
</style>
